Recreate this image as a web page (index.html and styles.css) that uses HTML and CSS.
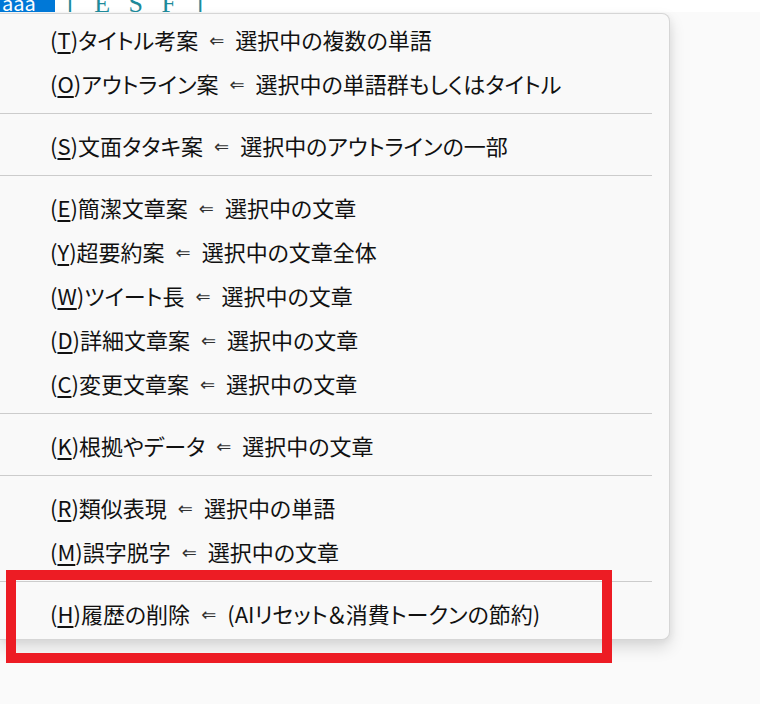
FILE: index.html
```html
<!DOCTYPE html>
<html lang="ja">
<head>
<meta charset="utf-8">
<link rel="stylesheet" href="styles.css">
</head>
<body>
<div class="topstrip">
  <span class="sel">ааа</span>
  <span class="bracket">[ E S F ]</span>
</div>
<div class="menu">
  <div class="item"><span>(<u>T</u>)タイトル考案</span><span class="arr">⇐</span><span>選択中の複数の単語</span></div>
  <div class="item"><span>(<u>O</u>)アウトライン案</span><span class="arr">⇐</span><span>選択中の単語群もしくはタイトル</span></div>
  <div class="sep"></div>
  <div class="item"><span>(<u>S</u>)文面タタキ案</span><span class="arr">⇐</span><span>選択中のアウトラインの一部</span></div>
  <div class="sep"></div>
  <div class="item"><span>(<u>E</u>)簡潔文章案</span><span class="arr">⇐</span><span>選択中の文章</span></div>
  <div class="item"><span>(<u>Y</u>)超要約案</span><span class="arr">⇐</span><span>選択中の文章全体</span></div>
  <div class="item"><span>(<u>W</u>)ツイート長</span><span class="arr">⇐</span><span>選択中の文章</span></div>
  <div class="item"><span>(<u>D</u>)詳細文章案</span><span class="arr">⇐</span><span>選択中の文章</span></div>
  <div class="item"><span>(<u>C</u>)変更文章案</span><span class="arr">⇐</span><span>選択中の文章</span></div>
  <div class="sep"></div>
  <div class="item"><span>(<u>K</u>)根拠やデータ</span><span class="arr">⇐</span><span>選択中の文章</span></div>
  <div class="sep"></div>
  <div class="item"><span>(<u>R</u>)類似表現</span><span class="arr">⇐</span><span>選択中の単語</span></div>
  <div class="item"><span>(<u>M</u>)誤字脱字</span><span class="arr">⇐</span><span>選択中の文章</span></div>
  <div class="sep"></div>
  <div class="item"><span>(<u>H</u>)履歴の削除</span><span class="arr">⇐</span><span>(AIリセット＆消費トークンの節約)</span></div>
</div>
<div class="highlight"></div>
</body>
</html>
```

FILE: styles.css
```css
html, body {
  margin: 0;
  padding: 0;
}
body {
  background: #fafafa;
  width: 760px;
  height: 704px;
  overflow: hidden;
  position: relative;
  font-family: "Noto Sans CJK JP", "Noto Sans", sans-serif;
}
.topstrip {
  height: 12px;
  background: #ffffff;
  overflow: hidden;
  display: flex;
  align-items: flex-end;
}
.sel {
  display: block;
  width: 55px;
  height: 12px;
  background: #0078d7;
  color: #ffffff;
  font-size: 20px;
  line-height: 6px;
  overflow: hidden;
  text-indent: 2px;
}
.bracket {
  display: block;
  margin-left: 12px;
  color: #1e8a9a;
  font-family: "Liberation Serif", serif;
  font-size: 26px;
  line-height: 8px;
  height: 12px;
  letter-spacing: 6px;
  overflow: hidden;
}
.menu {
  width: 670px;
  box-sizing: border-box;
  margin-top: 1px;
  background: #f9f9f9;
  border: 1px solid #d6d6d6;
  border-left: none;
  border-radius: 0 8px 8px 0;
  padding: 3px 0 4px 0;
  box-shadow: 0 8px 16px rgba(0, 0, 0, 0.13), 2px 2px 6px rgba(0, 0, 0, 0.04);
}
.item {
  height: 44px;
  display: flex;
  align-items: center;
  padding-left: 50px;
  font-size: 22px;
  font-weight: 400;
  color: #111111;
  font-feature-settings: "palt";
  white-space: nowrap;
}
.item u {
  text-underline-offset: 3px;
  text-decoration-thickness: 1.5px;
}
.arr {
  font-family: "DejaVu Sans", sans-serif;
  font-weight: 400;
  font-size: 18px;
  margin: 2px 11px 0 11px;
  color: #333333;
}
.sep {
  height: 1px;
  background: #cccccc;
  margin: 8px 17px 9px 0;
}
.highlight {
  position: absolute;
  left: 6px;
  top: 570px;
  width: 606px;
  height: 93px;
  box-sizing: border-box;
  border: 10px solid #ed1c24;
}
```
